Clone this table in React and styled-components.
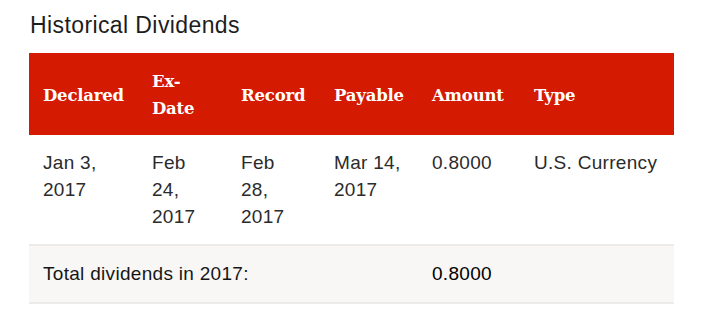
import React from "react";
import styled, { createGlobalStyle } from "styled-components";

const GlobalStyle = createGlobalStyle`
  body {
    margin: 0;
    background: #ffffff;
    font-family: "Liberation Sans", Arial, sans-serif;
  }
`;

const Wrapper = styled.div`
  padding: 11px 36px 0 29px;
  width: 645px;
`;

const Title = styled.h2`
  margin: 0 0 14px 1px;
  font-size: 23px;
  font-weight: 400;
  color: #1d1d1d;
  line-height: 28px;
  letter-spacing: 0.4px;
`;

const Table = styled.table`
  width: 645px;
  border-collapse: collapse;
  table-layout: fixed;
`;

const HeadRow = styled.tr`
  background-color: #d41a00;
  height: 82px;
`;

const Th = styled.th`
  text-align: left;
  vertical-align: middle;
  padding: 2px 8px 0 14px;
  font-family: "DejaVu Serif", "Liberation Serif", serif;
  font-weight: 700;
  font-size: 16.5px;
  line-height: 27px;
  color: #ffffff;
  letter-spacing: -0.2px;
`;

const Td = styled.td`
  vertical-align: top;
  padding: 14px 14px 14px 14px;
  font-size: 19px;
  line-height: 27px;
  letter-spacing: 0.3px;
  color: #2b2b2b;
`;

const TotalRow = styled.tr`
  background-color: #f8f7f6;
  border-top: 2px solid #ecebea;
  border-bottom: 2px solid #ecebea;
  height: 58px;
`;

const TotalCell = styled.td`
  vertical-align: middle;
  padding: 0 8px 0 14px;
  font-size: 19px;
  letter-spacing: 0.3px;
  color: ${(p) => (p.$strong ? "#000000" : "#161616")};
`;

const columns = [
  { label: "Declared", width: 109 },
  { label: "Ex-Date", width: 89 },
  { label: "Record", width: 93 },
  { label: "Payable", width: 98 },
  { label: "Amount", width: 102 },
  { label: "Type", width: 154 },
];

const rows = [
  ["Jan 3, 2017", "Feb 24, 2017", "Feb 28, 2017", "Mar 14, 2017", "0.8000", "U.S. Currency"],
];

export default function App() {
  return (
    <>
      <GlobalStyle />
      <Wrapper>
        <Title>Historical Dividends</Title>
        <Table>
          <colgroup>
            {columns.map((c) => (
              <col key={c.label} style={{ width: c.width }} />
            ))}
          </colgroup>
          <thead>
            <HeadRow>
              {columns.map((c) => (
                <Th key={c.label}>{c.label}</Th>
              ))}
            </HeadRow>
          </thead>
          <tbody>
            {rows.map((r, i) => (
              <tr key={i}>
                {r.map((v, j) => (
                  <Td key={j}>{v}</Td>
                ))}
              </tr>
            ))}
            <TotalRow>
              <TotalCell colSpan={4}>Total dividends in 2017:</TotalCell>
              <TotalCell $strong>0.8000</TotalCell>
              <TotalCell />
            </TotalRow>
          </tbody>
        </Table>
      </Wrapper>
    </>
  );
}
